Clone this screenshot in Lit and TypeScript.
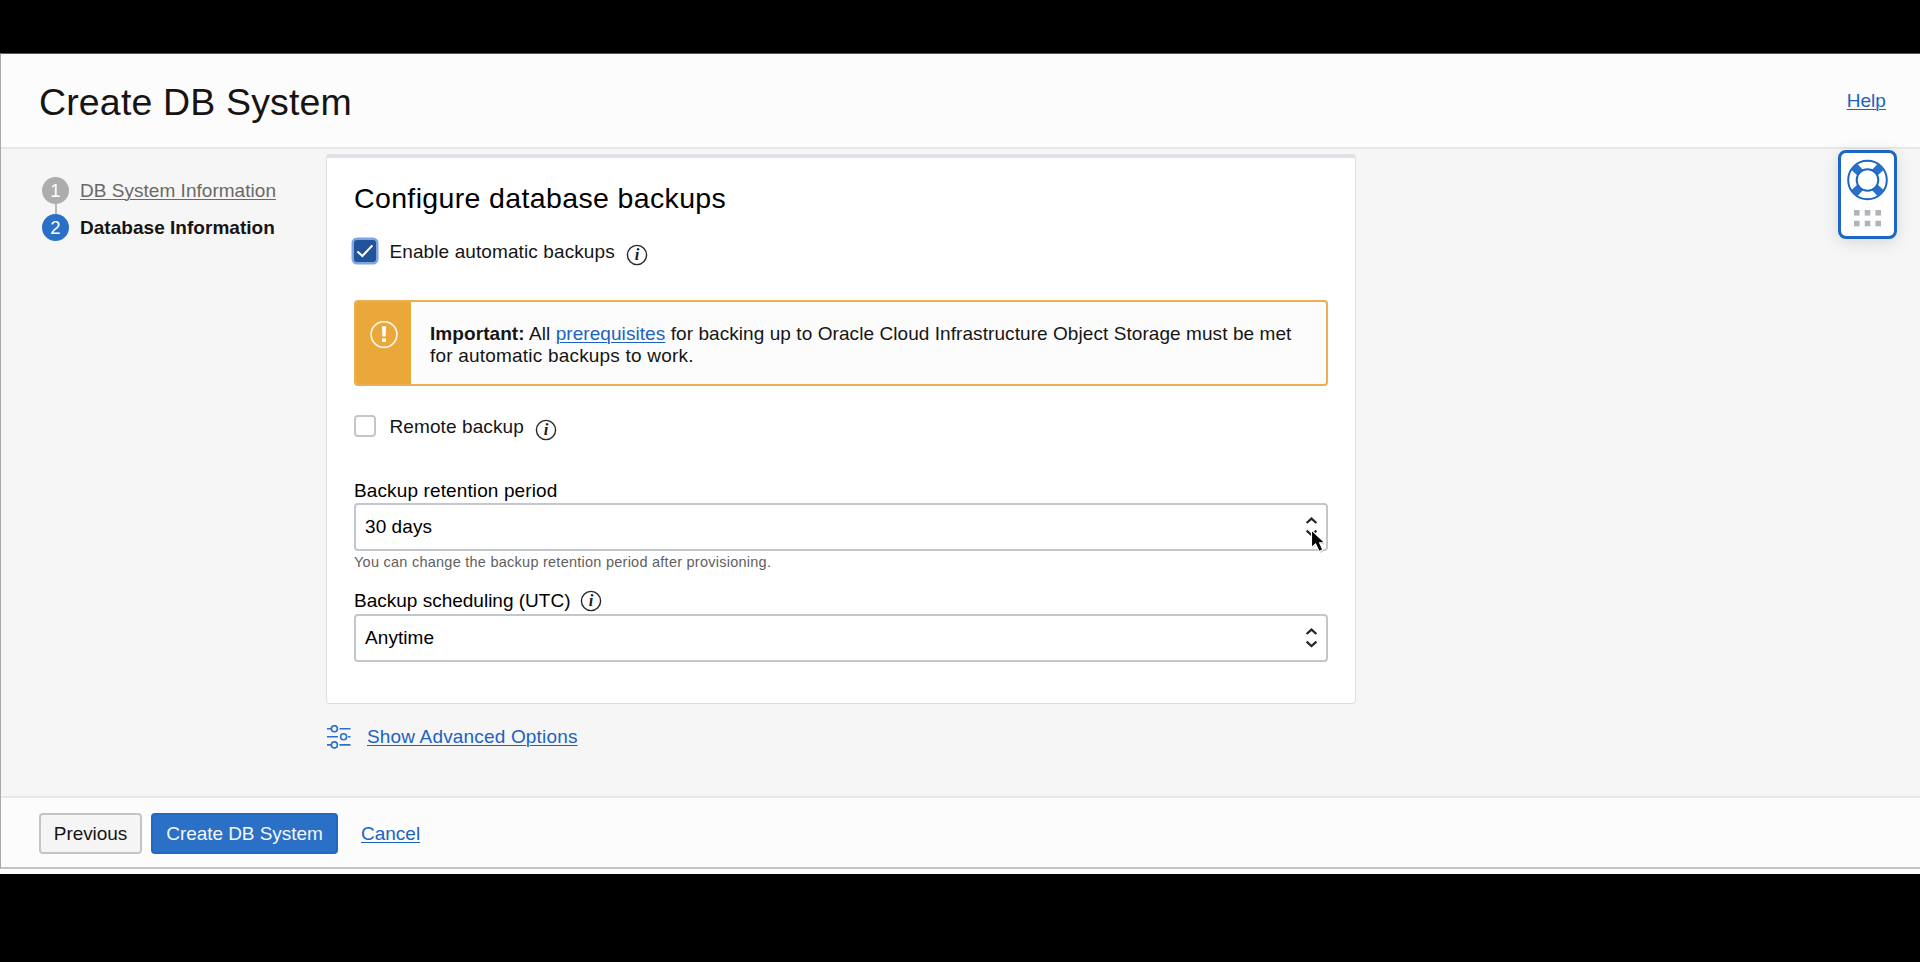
import { LitElement, html, css, svg } from "lit";
import { customElement, property } from "lit/decorators.js";

@customElement("info-icon")
class InfoIcon extends LitElement {
  static styles = css`
    :host { display: block; width: 22px; height: 22px; flex: none; }
    svg { display: block; }
    text { font: italic bold 16.5px "Liberation Serif", serif; fill: #1c1b1a; }
  `;
  render() {
    return html`<svg width="22" height="22" viewBox="0 0 22 22">
      <circle cx="11" cy="11" r="9.6" fill="none" stroke="#2a2826" stroke-width="1.4" />
      <text x="11" y="16" text-anchor="middle">i</text>
    </svg>`;
  }
}

@customElement("select-box")
class SelectBox extends LitElement {
  @property() value = "";
  @property({ type: Boolean }) pointer = false;
  static styles = css`
    :host { display: block; position: relative; }
    .box {
      box-sizing: border-box; height: 48px; border: 2px solid #c3c6cb; border-radius: 4px;
      background: #fff; display: flex; align-items: center; justify-content: space-between;
      padding: 0 8px 0 9px; line-height: 22px;
    }
    svg { display: block; }
    .arrow { position: absolute; left: 956px; top: 26px; }
  `;
  render() {
    return html`<div class="box">
        <span>${this.value}</span>
        <svg width="13" height="22" viewBox="0 0 13 22" fill="none" stroke="#24272b" stroke-width="2.2">
          <path d="M1.6 7 L6.5 2.6 L11.4 7" />
          <path d="M1.6 14.6 L6.5 19 L11.4 14.6" />
        </svg>
      </div>
      ${this.pointer
        ? html`<svg class="arrow" width="18" height="27" viewBox="0 0 18 27">
            <path d="M1.5 1 V18.5 L5.6 15 L9 22.5 L12.8 20.8 L9.6 13.7 H14.6 Z" fill="#888" opacity=".35" transform="translate(1 1.6)" />
            <path d="M1.5 1 V18.5 L5.6 15 L9 22.5 L12.8 20.8 L9.6 13.7 H14.6 Z" fill="#000" stroke="#fff" stroke-width="1.1" />
          </svg>`
        : ""}`;
  }
}

@customElement("app-root")
class AppRoot extends LitElement {
  static styles = css`
    :host {
      display: block; box-sizing: border-box; width: 100%; height: 962px; background: #000;
      padding-top: 53px; overflow: hidden; color: #161513;
      font: 19px/22px "Liberation Sans", Arial, sans-serif; letter-spacing: 0.07px;
    }
    a { color: #1b62c2; text-decoration: underline; text-underline-offset: 2px; text-decoration-thickness: 1.4px; cursor: pointer; }
    svg { display: block; }
    .window { height: 821px; box-sizing: border-box; background: #fcfcfc; padding-bottom: 5px; }
    .frame {
      box-sizing: border-box; height: 816px; border: 1px solid #a9a9ab; border-top-color: #555a66;
      border-right: 0; border-bottom: 2px solid #c3c3c8; display: flex; flex-direction: column; background: #f6f6f6;
    }
    header {
      box-sizing: border-box; height: 95px; flex: none; background: #fcfcfc; border-bottom: 2px solid #e8e8e8;
      display: flex; justify-content: space-between; padding: 26px 34px 0 38px;
    }
    h1 { margin: 0; font-size: 37.5px; line-height: 44px; font-weight: 400; letter-spacing: 0.15px; }
    .help { padding-top: 10px; }
    .body { flex: 1; display: flex; position: relative; }
    nav { width: 284px; padding: 28px 0 0 41px; box-sizing: content-box; flex: none; }
    .step { display: flex; align-items: center; gap: 11px; height: 27px; letter-spacing: 0.03px; }
    .num {
      width: 27px; height: 27px; border-radius: 50%; background: #adadad; color: #fff;
      display: flex; align-items: center; justify-content: center; letter-spacing: 0; font-size: 18.5px;
    }
    .active .num { background: #2a70c8; }
    .step a { color: #6a6866; }
    .link { width: 2px; height: 10px; background: #b9b9b9; margin-left: 13px; }
    .col { width: 1030px; padding-top: 5px; }
    .card {
      box-sizing: border-box; height: 550px; background: #fff; border: 1px solid #dcdee2;
      border-top: 4px solid #dfe1e6; border-radius: 4px; padding: 23px 27px 0;
    }
    h2 { margin: 0; font-size: 28.5px; line-height: 34px; font-weight: 400; letter-spacing: 0.36px; color: #000; }
    .check { display: flex; align-items: center; height: 22px; }
    .check .text { padding-top: 2px; letter-spacing: 0.1px; }
    .box { box-sizing: border-box; width: 22px; height: 22px; border: 2px solid #c3c6cb; border-radius: 4px; margin-right: 13.5px; flex: none; }
    .box.on { border: 0; background: #20539a; border-radius: 3px; box-shadow: 0 0 0 2.5px #7ea5dd; }
    .check info-icon { margin: 8px 0 0 11px; }
    .auto { margin-top: 25px; }
    .alert {
      margin-top: 38px; box-sizing: border-box; height: 86px; border: 2px solid #ecae52; border-radius: 4px;
      display: flex; background: #fcfcfc; overflow: hidden;
    }
    .badge { width: 55px; background: #eaa83a; padding-top: 19px; box-sizing: border-box; flex: none; }
    .badge svg { margin-left: 14px; }
    .alert p { margin: 21px 0 0 19px; white-space: nowrap; }
    .alert .second { letter-spacing: 0.2px; }
    .remote { margin-top: 29px; }
    .label { display: flex; height: 22px; color: #000; }
    .retention { margin-top: 43px; letter-spacing: 0.12px; }
    select-box { margin-top: 1px; color: #000; }
    .hint { font-size: 14.5px; line-height: 18px; color: #62605e; margin-top: 2px; letter-spacing: 0.25px; }
    .sched { margin-top: 19px; letter-spacing: 0; }
    .sched + select-box { margin-top: 2px; }
    .sched info-icon { margin-left: 10px; }
    .advanced { display: flex; align-items: center; margin-top: 21px; height: 24px; gap: 16px; letter-spacing: 0.17px; }
    .advanced svg { margin-left: 1px; }
    footer {
      box-sizing: border-box; height: 71px; flex: none; background: #fcfcfc; border-top: 2px solid #e8e8e8;
      display: flex; padding: 15px 0 0 38px;
    }
    .btn {
      box-sizing: border-box; height: 41px; border: 2px solid #c2c5c8; border-radius: 4px; background: #f5f5f5;
      display: flex; align-items: center; justify-content: center; width: 103px; letter-spacing: -0.06px;
    }
    .btn.primary { background: #2a70c6; border-color: #2268c2; color: #f4f8fd; width: 187px; margin: 0 23px 0 9px; }
    .cancel { padding-top: 10px; letter-spacing: 0; }
    .widget {
      position: absolute; left: 1837px; top: 1px; width: 59px; height: 89px; box-sizing: border-box;
      border: 3px solid #1c66c6; border-radius: 8px; background: #fff; box-shadow: 0 3px 16px rgba(0,0,0,.13);
    }
  `;

  render() {
    const dots = [0, 1].map((r) => [0, 1, 2].map((c) =>
      svg`<rect x=${13 + c * 10.7} y=${57 + r * 10.7} width="5.6" height="5.6" fill="#b1b4b7" />`));
    const wedges = [45, 135, 225, 315].map((a) =>
      svg`<path d="M36 23 L45.6 22.7 V31.3 L36 31 Z" transform=${`rotate(${a} 26.5 27)`} fill="#2a70c8" />`);
    return html`<div class="window"><div class="frame">
      <header><h1>Create DB System</h1><a class="help">Help</a></header>
      <div class="body">
        <nav>
          <div class="step"><span class="num">1</span><a>DB System Information</a></div>
          <div class="link"></div>
          <div class="step active"><span class="num">2</span><b>Database Information</b></div>
        </nav>
        <div class="col">
          <section class="card">
            <h2>Configure database backups</h2>
            <div class="check auto">
              <span class="box on"><svg width="22" height="22" viewBox="0 0 22 22" fill="none" stroke="#fff" stroke-width="2.1"><path d="M3.4 11.4 L8.4 16 L18.4 5.4" /></svg></span>
              <span class="text">Enable automatic backups</span><info-icon></info-icon>
            </div>
            <div class="alert">
              <div class="badge"><svg width="28" height="28" viewBox="0 0 28 28">
                <circle cx="14" cy="13.5" r="12.9" fill="none" stroke="#fdf3e2" stroke-width="1.7" />
                <path d="M11.9 5.3 H16.1 L15.6 15.4 H12.4 Z M12 17.4 H16 V21 H12 Z" fill="#fff" />
              </svg></div>
              <p><b>Important:</b> All <a>prerequisites</a> for backing up to Oracle Cloud Infrastructure Object Storage must be met<br /><span class="second">for automatic backups to work.</span></p>
            </div>
            <div class="check remote"><span class="box"></span><span class="text">Remote backup</span><info-icon></info-icon></div>
            <div class="label retention">Backup retention period</div>
            <select-box value="30 days" pointer></select-box>
            <div class="hint">You can change the backup retention period after provisioning.</div>
            <div class="label sched">Backup scheduling (UTC)<info-icon></info-icon></div>
            <select-box value="Anytime"></select-box>
          </section>
          <div class="advanced">
            <svg width="24" height="24" viewBox="0 0 24 24" fill="none" stroke="#2a70c8" stroke-width="1.6">
              <path d="M0 3.7H4M12.5 3.7H23.5M0 11.8H11M21 11.8H23.5M0 19.9H4M12.5 19.9H23.5" />
              <circle cx="7.4" cy="3.7" r="3" /><circle cx="16.6" cy="11.8" r="3" /><circle cx="7.4" cy="19.9" r="3" />
            </svg>
            <a>Show Advanced Options</a>
          </div>
        </div>
        <div class="widget"><svg width="53" height="83" viewBox="0 0 53 83">
          <circle cx="26.5" cy="27" r="19.3" fill="#fff" stroke="#1c66c6" stroke-width="2" />
          ${wedges}
          <circle cx="26.5" cy="27" r="10.8" fill="#fff" stroke="#1c66c6" stroke-width="2" />
          ${dots}
        </svg></div>
      </div>
      <footer><div class="btn">Previous</div><div class="btn primary">Create DB System</div><a class="cancel">Cancel</a></footer>
    </div></div>`;
  }
}
